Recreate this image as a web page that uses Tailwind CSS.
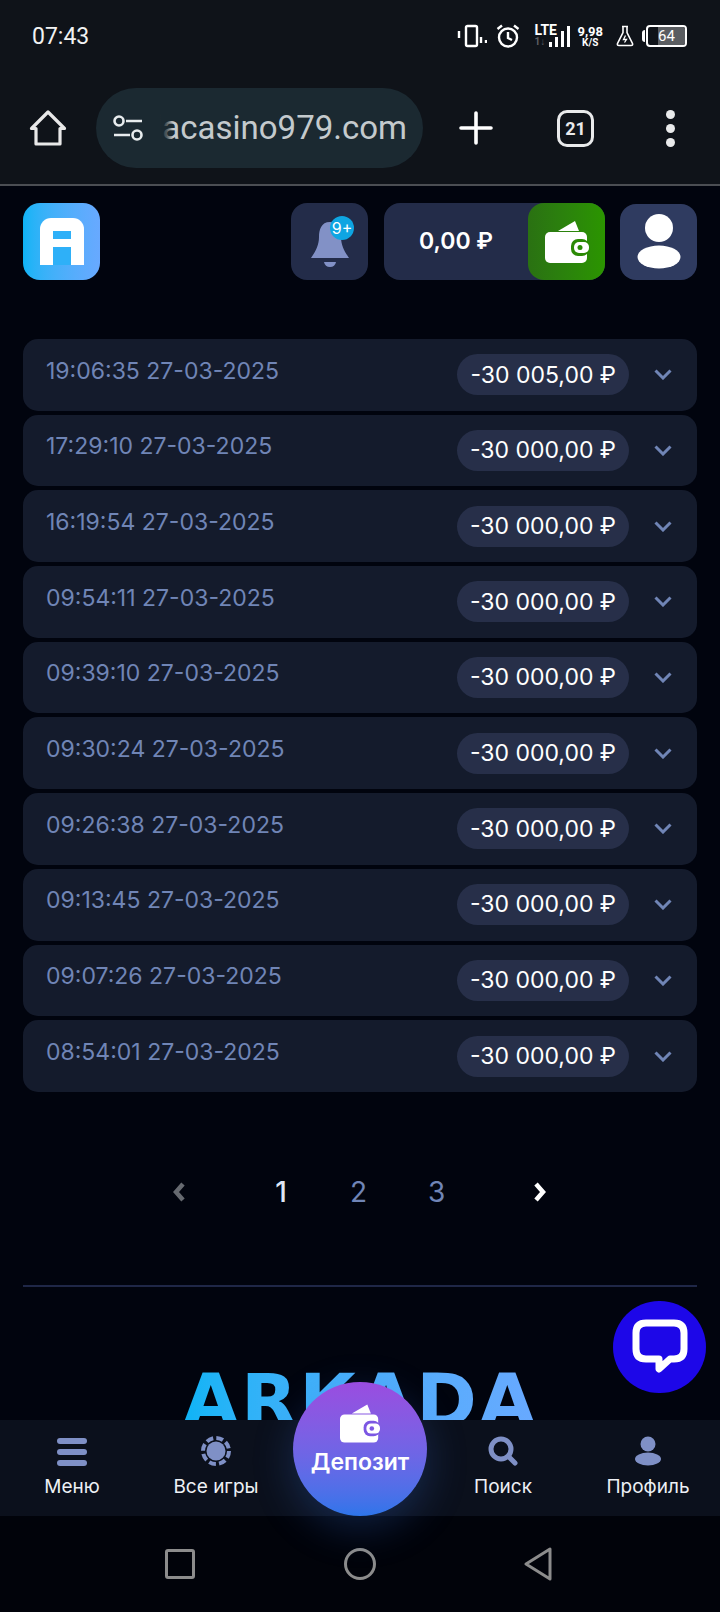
<!DOCTYPE html>
<html>
    <head>
        <meta charset="UTF-8" />
        <meta name="viewport" content="width=device-width, initial-scale=1.0" />
        <title>arkada</title>
        <script src="https://cdn.jsdelivr.net/npm/@tailwindcss/browser@4"></script>
    </head>
    <body class="bg-[#01040e] font-[Inter,sans-serif] text-white w-[720px] h-[1612px] overflow-hidden flex flex-col">
        <!-- browser chrome -->
        <div class="bg-[#0f1319] h-[186px] shrink-0 border-b-2 border-[#4b4e53] font-[Roboto,sans-serif]">
            <div class="h-[72px] pl-8 pr-[33px] flex items-center">
                <span class="text-[23px] text-[#f1f2f2] pt-[3px]">07:43</span>
                <div class="ml-auto flex items-center">
                    <svg width="30" height="24" viewBox="0 0 30 24" fill="none" stroke="white" class="mr-[9px]">
                        <rect x="9" y="2" width="11" height="20" rx="1.5" stroke-width="2.4" />
                        <path d="M2 7v7M24 13v6M29 16v3" stroke-width="2.4" />
                    </svg>
                    <svg width="24" height="24" viewBox="0 0 24 24" fill="none" stroke="white" stroke-width="2.4" class="mr-[14px]">
                        <circle cx="12" cy="13.5" r="9" />
                        <path d="M12 8v6l4 2M1.5 5L6 1.5M22.5 5L18 1.5" />
                    </svg>
                    <div class="w-[24px] h-[24px] relative">
                        <div class="text-[14px] leading-[13px] font-bold">LTE</div>
                        <div class="text-[10px] leading-[10px] font-bold text-[#5c5f63]">1↓</div>
                    </div>
                    <div class="flex items-end gap-[3px] h-[22px] mr-[7px] -ml-[9px]">
                        <div class="w-[3px] h-[5px] bg-white"></div>
                        <div class="w-[3px] h-[10px] bg-white"></div>
                        <div class="w-[3px] h-[16px] bg-white"></div>
                        <div class="w-[3px] h-[21px] bg-white"></div>
                    </div>
                    <div class="flex flex-col items-center font-bold mr-[13px]">
                        <span class="text-[13px] leading-[13px]">9,98</span>
                        <span class="text-[10px] leading-[10px]">K/S</span>
                    </div>
                    <svg width="18" height="22" viewBox="0 0 18 22" fill="none" stroke="white" stroke-width="1.6" class="mr-[8px]">
                        <path d="M6 1.5h6M7 1.5v6L1.5 18.5q-.6 2 1.5 2h12q2.100 0 1.500-2L11 7.500v-6" />
                        <path d="M9.500 10.500l-2 4h3l-2 3" stroke-width="1.300" />
                    </svg>
                    <div class="w-[3px] h-[12px] bg-white rounded-l-sm mr-[1px]"></div>
                    <div class="relative w-[41px] h-[22px] border-2 border-white rounded-[4px] flex items-center justify-center overflow-hidden">
                        <div class="absolute left-[10px] right-0 inset-y-0 bg-[#5a5d61]"></div>
                        <span class="relative text-[15px] text-white">64</span>
                    </div>
                </div>
            </div>
            <div class="h-[112px] flex items-center">
                <svg width="38" height="38" viewBox="0 0 38 38" fill="none" stroke="#e8e8e8" stroke-width="3.200" stroke-linejoin="round" class="ml-[29px]">
                    <path d="M19 3L2.500 19.500H7V35H31V19.500H35.500Z" />
                </svg>
                <div class="relative ml-[29px] w-[327px] h-[80px] rounded-full bg-[#1b2931] flex items-center pl-[17px] pr-[16px]">
                    <svg width="30" height="26" viewBox="0 0 30 26" fill="none" stroke="#e8ecee" stroke-width="2.600">
                        <circle cx="6" cy="6" r="4.500" />
                        <path d="M13 6H29M1 20H17" />
                        <circle cx="24" cy="20" r="4.500" />
                    </svg>
                    <div class="relative ml-[17px] flex-1 overflow-hidden flex justify-end">
                        <span class="text-[33px] text-[#c4cacd] whitespace-nowrap">arkadacasino979.com</span>
                        <div class="absolute left-0 inset-y-0 w-[13px] bg-gradient-to-r from-[#1b2931] via-[#1b2931]/70 to-transparent"></div>
                    </div>
                </div>
                <svg width="34" height="34" viewBox="0 0 34 34" stroke="white" stroke-width="3.600" stroke-linecap="round" class="ml-[36px]">
                    <path d="M17 2V32M2 17H32" />
                </svg>
                <div class="ml-[64px] w-[37px] h-[37px] border-[3.500px] border-[#e9eaeb] rounded-[10px] flex items-center justify-center">
                    <span class="text-[18px] font-bold text-[#e9eaeb]">21</span>
                </div>
                <div class="ml-[72px] flex flex-col gap-[5px]">
                    <div class="w-[9px] h-[9px] rounded-full bg-[#e9eaeb]"></div>
                    <div class="w-[9px] h-[9px] rounded-full bg-[#e9eaeb]"></div>
                    <div class="w-[9px] h-[9px] rounded-full bg-[#e9eaeb]"></div>
                </div>
            </div>
        </div>

        <!-- page -->
        <main class="relative flex-1 overflow-hidden px-[23px]">
            <header class="flex items-start pt-[17px]">
                <!-- logo mark built from css shapes -->
                <div class="w-[77px] h-[77px] rounded-[17px] bg-gradient-to-r from-[#0bb4f6] to-[#68a9ff] flex items-center justify-center">
                    <div class="relative w-[44px] h-[47px] bg-white rounded-t-[11px]">
                        <div class="absolute left-[13px] right-[13px] top-[13px] h-[8px] bg-[#2eb0f8]"></div>
                        <div class="absolute left-[13px] right-[13px] bottom-0 h-[18px] bg-[#2eb0f8]"></div>
                    </div>
                </div>
                <div class="relative ml-auto w-[77px] h-[77px] rounded-[16px] bg-[#232c49]">
                    <svg width="42" height="46" viewBox="0 0 42 46" fill="#8291c6" class="absolute left-[18px] top-[18px]">
                        <path d="M21 1C12 1 10 9 10 16C10 25 6 31 2 37H40C36 31 32 25 32 16C32 9 30 1 21 1Z" />
                        <path d="M15 41H27Q26 46 21 46Q16 46 15 41Z" />
                    </svg>
                    <div class="absolute left-[39px] top-[13px] w-[24px] h-[24px] rounded-full bg-[#0ea5e2] flex items-center justify-center text-[16px] leading-none">9+</div>
                </div>
                <div class="relative ml-[16px] w-[221px] h-[77px] rounded-[16px] bg-[#232c49] flex items-center">
                    <span class="ml-[35px] text-[23px] font-semibold">0,00 ₽</span>
                    <div class="absolute right-0 inset-y-0 w-[77px] rounded-[16px] bg-gradient-to-r from-[#2a7112] to-[#2b9500] flex items-center justify-center">
                        <svg width="44" height="42" viewBox="0 0 44 42">
                            <path d="M13 10L30 0L34 10Z" fill="white" />
                            <rect x="0" y="11" width="42" height="31" rx="5" fill="white" />
                            <rect x="26" y="18" width="18" height="17" rx="7" fill="#2b8a05" />
                            <rect x="29" y="21" width="15" height="11" rx="5" fill="white" />
                            <circle cx="35" cy="26.500" r="2.500" fill="#2b8a05" />
                        </svg>
                    </div>
                </div>
                <div class="relative ml-[15px] w-[77px] h-[76px] mt-px rounded-[16px] bg-[#2f3b60] flex items-center justify-center">
                    <svg width="44" height="56" viewBox="0 0 44 56" fill="white">
                        <ellipse cx="22" cy="14" rx="14" ry="14" />
                        <ellipse cx="22" cy="43" rx="21.500" ry="11.500" />
                    </svg>
                </div>
            </header>

            <section class="mt-[59px] flex flex-col gap-[4px]">
                <div class="h-[71.700px] rounded-[15px] bg-[#141b2c] flex items-center pl-[23px] pr-[25px]">
                    <span class="pb-[8px] text-[23px] text-[#7085b6]">19:06:35 27-03-2025</span>
                    <span class="ml-auto h-[41px] px-[13px] rounded-full bg-[#272f49] flex items-center text-[23px]">-30 005,00 ₽</span>
                    <svg width="18" height="11" viewBox="0 0 18 11" fill="none" stroke="#7085b6" stroke-width="3" class="ml-[25px]"><path d="M1.500 1.500L9 9L16.500 1.500" /></svg>
                </div>
                <div class="h-[71.700px] rounded-[15px] bg-[#141b2c] flex items-center pl-[23px] pr-[25px]">
                    <span class="pb-[8px] text-[23px] text-[#7085b6]">17:29:10 27-03-2025</span>
                    <span class="ml-auto h-[41px] px-[13px] rounded-full bg-[#272f49] flex items-center text-[23px]">-30 000,00 ₽</span>
                    <svg width="18" height="11" viewBox="0 0 18 11" fill="none" stroke="#7085b6" stroke-width="3" class="ml-[25px]"><path d="M1.500 1.500L9 9L16.500 1.500" /></svg>
                </div>
                <div class="h-[71.700px] rounded-[15px] bg-[#141b2c] flex items-center pl-[23px] pr-[25px]">
                    <span class="pb-[8px] text-[23px] text-[#7085b6]">16:19:54 27-03-2025</span>
                    <span class="ml-auto h-[41px] px-[13px] rounded-full bg-[#272f49] flex items-center text-[23px]">-30 000,00 ₽</span>
                    <svg width="18" height="11" viewBox="0 0 18 11" fill="none" stroke="#7085b6" stroke-width="3" class="ml-[25px]"><path d="M1.500 1.500L9 9L16.500 1.500" /></svg>
                </div>
                <div class="h-[71.700px] rounded-[15px] bg-[#141b2c] flex items-center pl-[23px] pr-[25px]">
                    <span class="pb-[8px] text-[23px] text-[#7085b6]">09:54:11 27-03-2025</span>
                    <span class="ml-auto h-[41px] px-[13px] rounded-full bg-[#272f49] flex items-center text-[23px]">-30 000,00 ₽</span>
                    <svg width="18" height="11" viewBox="0 0 18 11" fill="none" stroke="#7085b6" stroke-width="3" class="ml-[25px]"><path d="M1.500 1.500L9 9L16.500 1.500" /></svg>
                </div>
                <div class="h-[71.700px] rounded-[15px] bg-[#141b2c] flex items-center pl-[23px] pr-[25px]">
                    <span class="pb-[8px] text-[23px] text-[#7085b6]">09:39:10 27-03-2025</span>
                    <span class="ml-auto h-[41px] px-[13px] rounded-full bg-[#272f49] flex items-center text-[23px]">-30 000,00 ₽</span>
                    <svg width="18" height="11" viewBox="0 0 18 11" fill="none" stroke="#7085b6" stroke-width="3" class="ml-[25px]"><path d="M1.500 1.500L9 9L16.500 1.500" /></svg>
                </div>
                <div class="h-[71.700px] rounded-[15px] bg-[#141b2c] flex items-center pl-[23px] pr-[25px]">
                    <span class="pb-[8px] text-[23px] text-[#7085b6]">09:30:24 27-03-2025</span>
                    <span class="ml-auto h-[41px] px-[13px] rounded-full bg-[#272f49] flex items-center text-[23px]">-30 000,00 ₽</span>
                    <svg width="18" height="11" viewBox="0 0 18 11" fill="none" stroke="#7085b6" stroke-width="3" class="ml-[25px]"><path d="M1.500 1.500L9 9L16.500 1.500" /></svg>
                </div>
                <div class="h-[71.700px] rounded-[15px] bg-[#141b2c] flex items-center pl-[23px] pr-[25px]">
                    <span class="pb-[8px] text-[23px] text-[#7085b6]">09:26:38 27-03-2025</span>
                    <span class="ml-auto h-[41px] px-[13px] rounded-full bg-[#272f49] flex items-center text-[23px]">-30 000,00 ₽</span>
                    <svg width="18" height="11" viewBox="0 0 18 11" fill="none" stroke="#7085b6" stroke-width="3" class="ml-[25px]"><path d="M1.500 1.500L9 9L16.500 1.500" /></svg>
                </div>
                <div class="h-[71.700px] rounded-[15px] bg-[#141b2c] flex items-center pl-[23px] pr-[25px]">
                    <span class="pb-[8px] text-[23px] text-[#7085b6]">09:13:45 27-03-2025</span>
                    <span class="ml-auto h-[41px] px-[13px] rounded-full bg-[#272f49] flex items-center text-[23px]">-30 000,00 ₽</span>
                    <svg width="18" height="11" viewBox="0 0 18 11" fill="none" stroke="#7085b6" stroke-width="3" class="ml-[25px]"><path d="M1.500 1.500L9 9L16.500 1.500" /></svg>
                </div>
                <div class="h-[71.700px] rounded-[15px] bg-[#141b2c] flex items-center pl-[23px] pr-[25px]">
                    <span class="pb-[8px] text-[23px] text-[#7085b6]">09:07:26 27-03-2025</span>
                    <span class="ml-auto h-[41px] px-[13px] rounded-full bg-[#272f49] flex items-center text-[23px]">-30 000,00 ₽</span>
                    <svg width="18" height="11" viewBox="0 0 18 11" fill="none" stroke="#7085b6" stroke-width="3" class="ml-[25px]"><path d="M1.500 1.500L9 9L16.500 1.500" /></svg>
                </div>
                <div class="h-[71.700px] rounded-[15px] bg-[#141b2c] flex items-center pl-[23px] pr-[25px]">
                    <span class="pb-[8px] text-[23px] text-[#7085b6]">08:54:01 27-03-2025</span>
                    <span class="ml-auto h-[41px] px-[13px] rounded-full bg-[#272f49] flex items-center text-[23px]">-30 000,00 ₽</span>
                    <svg width="18" height="11" viewBox="0 0 18 11" fill="none" stroke="#7085b6" stroke-width="3" class="ml-[25px]"><path d="M1.500 1.500L9 9L16.500 1.500" /></svg>
                </div>
            </section>

            <nav class="mt-[83px] h-[34px] flex items-center text-[28px] text-[#7085b6]">
                <svg width="14" height="20" viewBox="0 0 14 20" fill="none" stroke="#666a70" stroke-width="4.500" class="ml-[149px]"><path d="M11 2L4 10L11 18" /></svg>
                <span class="ml-[87px] w-[16px] text-center font-medium text-[#dfe6f5]">1</span>
                <span class="ml-[61px] w-[16px] text-center">2</span>
                <span class="ml-[62px] w-[16px] text-center">3</span>
                <svg width="14" height="20" viewBox="0 0 14 20" fill="none" stroke="white" stroke-width="4.500" class="ml-[89px]"><path d="M3 2L10 10L3 18" /></svg>
            </nav>

            <div class="mt-[76px] h-[2px] bg-[#1f2747]"></div>

            <div class="mt-[74px] flex justify-center">
                <span class="font-['DejaVu_Sans',sans-serif] font-bold text-[73px] leading-[80px] tracking-[2px] bg-gradient-to-r from-[#0bb4f6] to-[#68a9ff] bg-clip-text text-transparent">ARKADA</span>
            </div>

            <button class="absolute right-[14px] bottom-[27px] w-[93px] h-[92px] rounded-full bg-[#1d07e8] flex items-center justify-center">
                <svg width="56" height="56" viewBox="0 0 56 56" fill="none" stroke="white" stroke-width="7" stroke-linejoin="round">
                    <path d="M14 4H42Q52 4 52 14V30Q52 40 42 40H38L27 50V40H14Q4 40 4 30V14Q4 4 14 4Z" />
                </svg>
            </button>
        </main>

        <!-- bottom bar -->
        <div class="relative h-[96px] shrink-0 bg-[#0b101c] flex items-start text-[19px] text-[#eef0f5]">
            <div class="absolute left-[293px] bottom-0 w-[134px] h-[134px] rounded-full bg-gradient-to-b from-[#9a4ce0] to-[#2d75ea] shadow-[0_12px_40px_rgba(60,120,230,0.25)] flex flex-col items-center pt-[21px]">
                <svg width="40" height="41" viewBox="0 0 44 42">
                    <path d="M13 10L30 0L34 10Z" fill="white" />
                    <rect x="0" y="11" width="42" height="31" rx="5" fill="white" />
                    <rect x="26" y="18" width="18" height="17" rx="7" fill="#7c57e3" />
                    <rect x="29" y="21" width="15" height="11" rx="5" fill="white" />
                    <circle cx="35" cy="26.500" r="2.500" fill="#7c57e3" />
                </svg>
                <span class="mt-[1px] text-[23px] font-semibold text-white">Депозит</span>
            </div>
            <div class="absolute left-[24px] w-[96px] top-[18px] flex flex-col items-center gap-[7px]">
                <div class="h-[28px] flex flex-col justify-between">
                    <div class="w-[30px] h-[6px] rounded-full bg-[#7f90c6]"></div>
                    <div class="w-[30px] h-[6px] rounded-full bg-[#7f90c6]"></div>
                    <div class="w-[30px] h-[6px] rounded-full bg-[#7f90c6]"></div>
                </div>
                <span>Меню</span>
            </div>
            <div class="absolute left-[156px] w-[120px] top-[16px] flex flex-col items-center gap-[7px]">
                <svg width="30" height="30" viewBox="0 0 30 30" fill="#7f90c6">
                    <circle cx="15" cy="15" r="9.500" />
                    <circle cx="15" cy="15" r="13" fill="none" stroke="#7f90c6" stroke-width="4" stroke-dasharray="7 3.200" />
                </svg>
                <span>Все игры</span>
            </div>
            <div class="absolute left-[443px] w-[120px] top-[16px] flex flex-col items-center gap-[7px]">
                <svg width="30" height="30" viewBox="0 0 30 30" fill="none" stroke="#7f90c6" stroke-width="5" stroke-linecap="round" class="-ml-[1px]">
                    <circle cx="13" cy="13" r="10" />
                    <path d="M21 21L27 27" />
                </svg>
                <span>Поиск</span>
            </div>
            <div class="absolute left-[588px] w-[120px] top-[16px] flex flex-col items-center gap-[7px]">
                <svg width="30" height="30" viewBox="0 0 30 30" fill="#7f90c6">
                    <circle cx="15" cy="8" r="7.500" />
                    <ellipse cx="15" cy="23" rx="13" ry="6.500" />
                </svg>
                <span>Профиль</span>
            </div>
        </div>

        <!-- system nav -->
        <div class="h-[96px] shrink-0 bg-[#01030a] flex items-center">
            <div class="ml-[165px] w-[30px] h-[30px] border-[3px] border-[#8c8c8c] rounded-[3px]"></div>
            <div class="ml-[149px] w-[32px] h-[32px] border-[3px] border-[#8c8c8c] rounded-full"></div>
            <svg width="28" height="34" viewBox="0 0 28 34" fill="none" stroke="#8c8c8c" stroke-width="3" stroke-linejoin="round" class="ml-[148px]">
                <path d="M26 2V32L2 17Z" />
            </svg>
        </div>
    </body>
</html>
